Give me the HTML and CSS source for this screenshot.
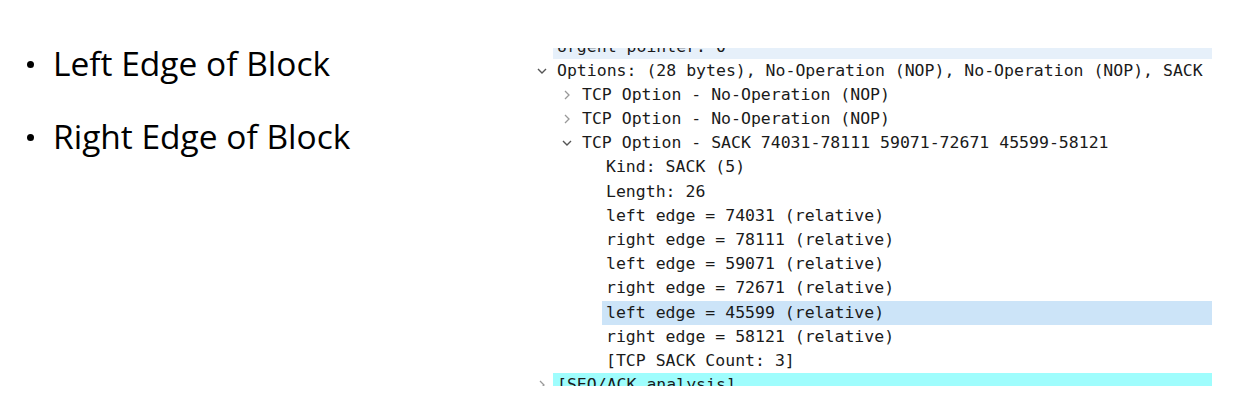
FILE: index.html
```html
<!DOCTYPE html>
<html>
<head>
<meta charset="utf-8">
<link rel="stylesheet" href="styles.css">
</head>
<body>
<div class="page">
  <ul class="bullets">
    <li>Left Edge of Block</li>
    <li>Right Edge of Block</li>
  </ul>
  <div class="panel">
    <div class="rows">
      <div class="row top"><span class="txt">Urgent pointer: 0</span></div>
      <div class="row"><svg class="chev" width="12" height="12" viewBox="0 0 12 12"><path d="M2 4 L6 8 L10 4" fill="none" stroke="#555" stroke-width="1.4"/></svg><span class="txt">Options: (28 bytes), No-Operation (NOP), No-Operation (NOP), SACK</span></div>
      <div class="row l1"><svg class="chev" width="12" height="12" viewBox="0 0 12 12"><path d="M4 2 L8 6 L4 10" fill="none" stroke="#999" stroke-width="1.3"/></svg><span class="txt">TCP Option - No-Operation (NOP)</span></div>
      <div class="row l1"><svg class="chev" width="12" height="12" viewBox="0 0 12 12"><path d="M4 2 L8 6 L4 10" fill="none" stroke="#999" stroke-width="1.3"/></svg><span class="txt">TCP Option - No-Operation (NOP)</span></div>
      <div class="row l1"><svg class="chev" width="12" height="12" viewBox="0 0 12 12"><path d="M2 4 L6 8 L10 4" fill="none" stroke="#555" stroke-width="1.4"/></svg><span class="txt">TCP Option - SACK 74031-78111 59071-72671 45599-58121</span></div>
      <div class="row l2"><span class="txt">Kind: SACK (5)</span></div>
      <div class="row l2"><span class="txt">Length: 26</span></div>
      <div class="row l2"><span class="txt">left edge = 74031 (relative)</span></div>
      <div class="row l2"><span class="txt">right edge = 78111 (relative)</span></div>
      <div class="row l2"><span class="txt">left edge = 59071 (relative)</span></div>
      <div class="row l2"><span class="txt">right edge = 72671 (relative)</span></div>
      <div class="row l2 sel"><span class="txt">left edge = 45599 (relative)</span></div>
      <div class="row l2"><span class="txt">right edge = 58121 (relative)</span></div>
      <div class="row l2"><span class="txt">[TCP SACK Count: 3]</span></div>
      <div class="row seq"><svg class="chev" width="12" height="12" viewBox="0 0 12 12"><path d="M4 2 L8 6 L4 10" fill="none" stroke="#999" stroke-width="1.3"/></svg><span class="txt">[SEQ/ACK analysis]</span></div>
    </div>
  </div>
</div>
</body>
</html>
```

FILE: styles.css
```css
html, body {
  margin: 0;
  padding: 0;
  background: #ffffff;
}

.page {
  display: flex;
  align-items: flex-start;
  height: 402px;
}

.bullets {
  list-style: none;
  margin: 0;
  padding: 37px 0 0 53px;
  width: 530px;
  box-sizing: border-box;
  font-family: "Open Sans", "Noto Sans", sans-serif;
  font-size: 33.5px;
  color: #000;
}

.bullets li {
  height: 73px;
  line-height: 52px;
  white-space: nowrap;
  position: relative;
}

.bullets li::before {
  content: "";
  position: absolute;
  left: -26px;
  top: 24px;
  width: 7px;
  height: 7px;
  border-radius: 50%;
  background: #000;
}

.panel {
  margin-top: 48px;
  width: 682px;
  height: 338px;
  overflow: hidden;
  font-family: "DejaVu Sans Mono", "Liberation Mono", monospace;
  font-size: 16.5px;
  color: #1a1a1a;
}

.rows {
  margin-top: -13.5px;
}

.row {
  height: 24.2px;
  line-height: 24.2px;
  display: flex;
  align-items: center;
  margin-left: 23px;
  padding-left: 4px;
  white-space: nowrap;
  position: relative;
}

.row .chev {
  position: absolute;
  left: -17px;
  top: 6px;
}

.row.top {
  background: #e6f0fa;
}

.row.l1 {
  padding-left: 29px;
}

.row.l1 .chev {
  left: 8px;
}

.row.l2 {
  margin-left: 72px;
  padding-left: 4px;
}

.row.sel {
  background: #cce4f8;
}

.row.seq {
  background: #9ffdfd;
}
```
